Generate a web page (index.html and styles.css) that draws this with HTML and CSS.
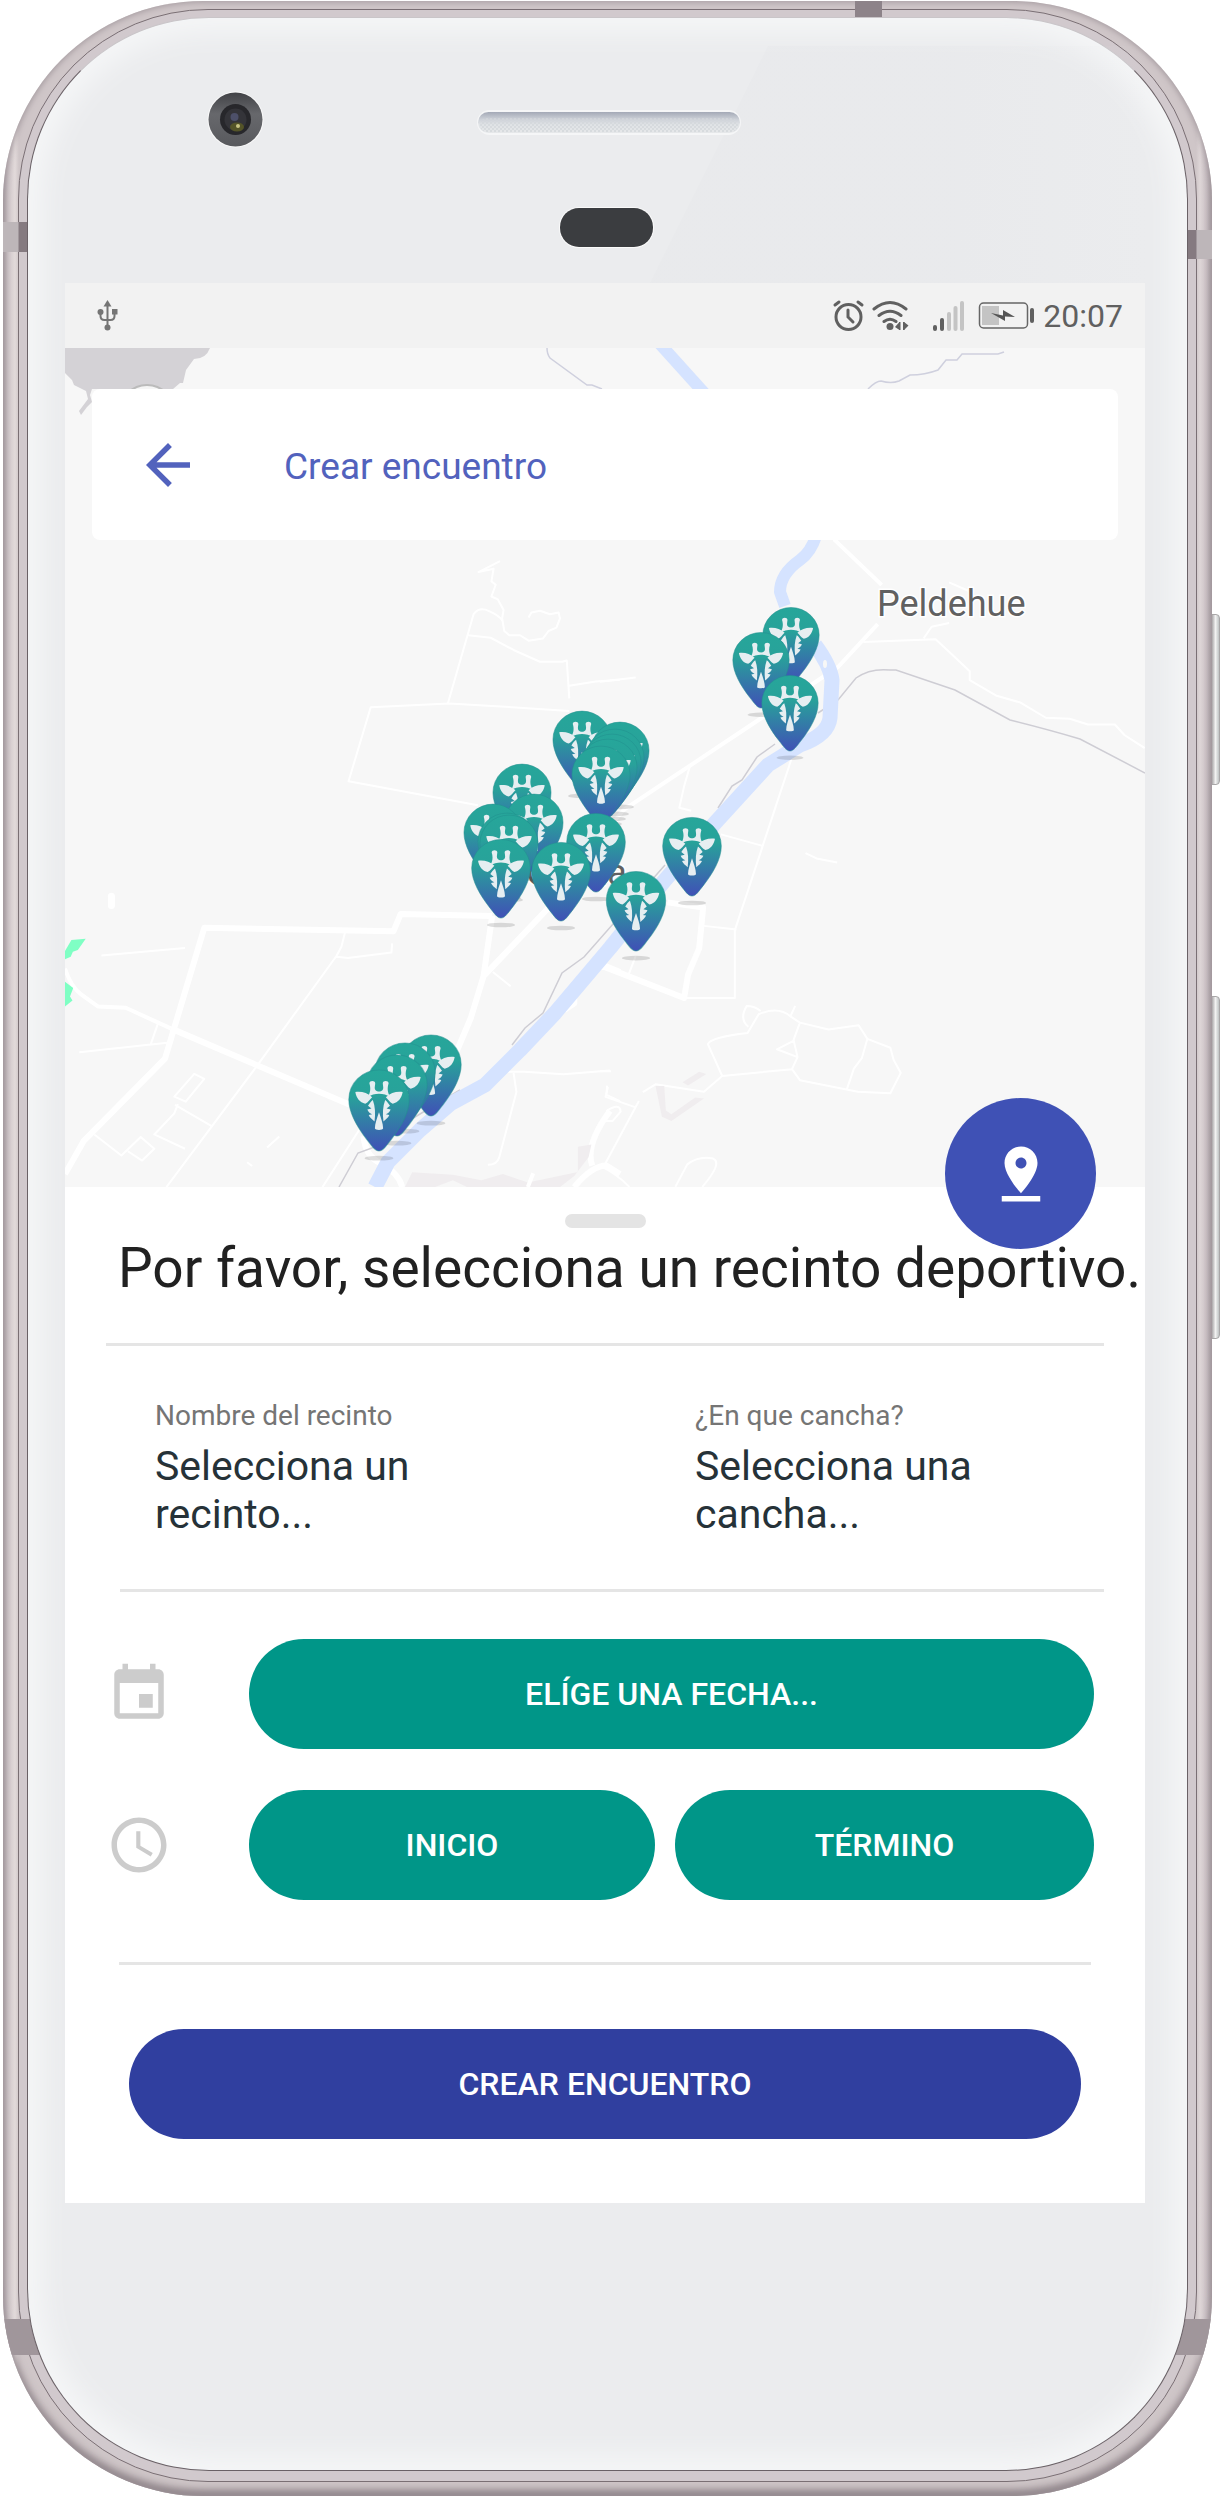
FILE: index.html
```html
<!DOCTYPE html>
<html lang="es">
<head>
<meta charset="utf-8">
<meta name="viewport" content="width=device-width, initial-scale=1">
<title>Crear encuentro</title>
<link rel="stylesheet" href="styles.css">
</head>
<body>
<div class="device">
  <span class="side-key side-key-power"></span>
  <span class="side-key side-key-volume"></span>
  <div class="shell">
    <span class="antenna antenna-top"></span>
    <span class="antenna antenna-left"></span>
    <span class="antenna antenna-right"></span>
    <span class="antenna antenna-base"></span>
    <div class="rail">
      <div class="glass">
        <svg class="bezel" viewBox="28 18 1159 265" aria-hidden="true">
          <defs>
            <linearGradient id="speaker" x1="0" y1="0" x2="0" y2="1">
              <stop offset="0" stop-color="#a3a9b6"/><stop offset=".35" stop-color="#cdd1d8"/><stop offset=".6" stop-color="#e0e3e6"/><stop offset="1" stop-color="#e6e8ea"/>
            </linearGradient>
            <linearGradient id="ring" x1="0" y1="0" x2="0" y2="1">
              <stop offset="0" stop-color="#414246"/><stop offset=".4" stop-color="#67686c"/><stop offset="1" stop-color="#58595d"/>
            </linearGradient>
            <linearGradient id="glare" x1="0" y1="0" x2="1" y2="0">
              <stop offset="0" stop-color="#e4e5e8"/><stop offset=".6" stop-color="#e4e5e8"/><stop offset="1" stop-color="#e4e5e8" stop-opacity="0"/>
            </linearGradient>
            <pattern id="mesh" width="4" height="4" patternUnits="userSpaceOnUse"><circle cx="1" cy="1" r="1" fill="#d3d7db"/><circle cx="3" cy="3" r="1" fill="#d3d7db"/></pattern>
          </defs>
          <path d="M768 46L650 283H1150V46Z" fill="url(#glare)" opacity=".3"/>
          <circle cx="235.500" cy="119.500" r="28" fill="#fafafa"/>
          <circle cx="235.500" cy="119.500" r="27" fill="url(#ring)"/>
          <circle cx="235.500" cy="119.500" r="15.500" fill="#27272b"/>
          <circle cx="235.500" cy="119.500" r="11" fill="#343439"/>
          <circle cx="234.500" cy="117" r="4" fill="#4d5069"/>
          <ellipse cx="237" cy="127" rx="7" ry="4.500" fill="#545428"/>
          <circle cx="238" cy="126" r="2" fill="#c9c584"/>
          <rect x="477" y="110" width="264" height="25" rx="12.500" fill="#f5f6f7"/>
          <rect x="478" y="112" width="262" height="21" rx="10.500" fill="url(#speaker)"/>
          <rect x="480" y="118" width="258" height="14" rx="7" fill="url(#mesh)"/>
          <rect x="559" y="207" width="95" height="41" rx="20" fill="#fafafa"/>
          <rect x="560" y="208" width="93" height="39" rx="19" fill="#3b3d40"/>
        </svg>

        <main class="screen">
          <div class="status-bar">
            <svg class="status-usb" viewBox="97 301 22 32" width="22" height="32" aria-label="USB">
              <g fill="none" stroke="#757575" stroke-width="2"><path d="M107.500 306V328M100.500 314V317Q100.500 321 104.500 321H110.500Q114.500 321 114.500 317V313"/></g>
              <g fill="#757575"><path d="M107.500 301L111.500 307.500H103.500Z"/><circle cx="107.500" cy="328.500" r="3"/><circle cx="100.500" cy="313" r="3"/><path d="M112 310H117.500V315.500H112Z"/></g>
            </svg>
            <svg class="status-icons" viewBox="832 298 204 36" width="204" height="36" aria-label="Alarma, wifi, señal y batería cargando">
              <g fill="none" stroke="#606060" stroke-width="3" stroke-linecap="round">
                <circle cx="848.500" cy="317" r="12.500"/><path d="M848 310V317L853 322M835 305L839 302M862 305L858 302"/>
                <path d="M874 309Q890 296 906 309M879 315.500Q890 307 901 315.500M884 321.500Q890 317 896 321.500"/>
              </g>
              <g fill="#606060"><circle cx="890" cy="326.500" r="3.500"/><path d="M895 327L899.500 322V330ZM908.500 325.500L904 322V330Z"/><path d="M899 322h1.500v8h-1.500zM903 322h1.500v8h-1.500z"/>
                <rect x="933" y="325" width="4" height="6" rx="2"/><rect x="940" y="318" width="4" height="13" rx="2"/></g>
              <g fill="#c4c4c4"><rect x="947" y="312" width="4" height="19" rx="2"/><rect x="953.500" y="306" width="4" height="25" rx="2"/><rect x="960" y="301" width="4" height="30" rx="2"/><rect x="982" y="306" width="17" height="19"/></g>
              <rect x="979.500" y="303" width="48" height="25" rx="4" fill="none" stroke="#666" stroke-width="1.500"/>
              <rect x="1030" y="308" width="4" height="15" rx="2" fill="#606060"/>
              <path d="M991 313L1003 315.500V310L1015 317L1005 316.500V321Z" fill="#555"/>
            </svg>
            <time class="status-time">20:07</time>
          </div>

          <section class="map" aria-label="Mapa de recintos">
            <svg class="map-canvas" viewBox="65 348 1080 839" role="img" aria-label="Recintos deportivos cerca de Colina">
              <defs>
                <linearGradient id="pin-fill" x1="0" y1="0" x2="0" y2="1">
                  <stop offset="0" stop-color="#26a69a"/><stop offset=".32" stop-color="#28a29a"/><stop offset="1" stop-color="#4050b6"/>
                </linearGradient>
                <g id="pin">
                  <ellipse cy="21" rx="42" ry="7" fill="#000" opacity=".13"/>
                  <path d="M0 0C-12 0-20-14-36-34C-62-68-88-110-88-150A88 86 0 0 1 88-150C88-110 62-68 36-34C20-14 12 0 0 0Z" fill="url(#pin-fill)" stroke="#22908f" stroke-opacity=".55" stroke-width="3"/>
                  <g fill="#e6eef1">
                    <path d="M-69-172C-50-174-34-170-20-157C-27-151-31-142-40-138C-56-141-66-155-69-172Z"/>
                    <path d="M69-172C50-174 34-170 20-157C27-151 31-142 40-138C56-141 66-155 69-172Z"/>
                    <path d="M-28-197C-28-206-11-206-11-197C-12-188-14-182-10-177C-5-172 5-172 10-177C14-182 12-188 11-197C11-206 28-206 28-197C24-185 24-172 33-157C14-170-14-170-33-157C-24-172-24-185-28-197Z"/>
                    <path d="M-18-149C-11-130-10-110-13-86C-19-92-27-97-30-105L-20-107C-26-110-32-114-34-121L-22-124L-32-132C-28-138-24-145-18-149Z"/>
                    <path d="M18-149C11-130 10-110 13-86C19-92 27-97 30-105L20-107C26-110 32-114 34-121L22-124L32-132C28-138 24-145 18-149Z"/>
                    <path d="M0-113C5-98 12-80 12-66C12-60-12-60-12-66C-12-80-5-98 0-113Z"/>
                  </g>
                </g>
              </defs>
              <rect x="65" y="348" width="1080" height="839" fill="#f7f7f7"/>

              <!-- north edge: hills and streams -->
              <path d="M65 348H210Q206 359 194 359L186 370L183 383H180L173 389H92L90 395L92 402L87 407L81 415L79 411L88 399L86 391L74 385L72 380L65 373Z" fill="#d4d2d6"/>
              <circle cx="147" cy="412" r="27" fill="#f5f5f5" stroke="#bbb" stroke-width="2"/>
              <g fill="none" stroke="#cfd0de" stroke-width="1.500">
                <path d="M547 348Q547 354 550 358L587 385L592 385L602 389"/>
                <path d="M868 389Q876 381 881 381Q891 384 899 381L910 375Q925 375 938 370L946 360H957L962 354H998L1004 352"/>
              </g>

              <!-- west side roads -->
              <g transform="translate(60 530) scale(.35714 .42092)" fill="none" stroke="#fff" stroke-linejoin="round">
                <g class="road-minor">
                  <path d="M1232 74L1172 100L1214 92L1208 122L1220 130L1208 158L1226 165L1242 190L1238 210L1244 240L1258 250H1288L1312 263L1352 258L1368 240L1390 232L1400 210L1396 196L1372 200L1344 192L1320 196L1312 208"/>
                  <path d="M1086 412L1158 200Q1174 182 1200 192Q1232 204 1238 215M1144 250L1206 256L1270 285L1344 313H1406L1419 310L1426 400M1426 370L1500 360L1568 356"/>
                  <path d="M1426 430L1210 418L1090 412L870 421L808 597L1170 654"/>
                  <path d="M116 1011L350 993M54 1241L300 1218M276 1168L254 1222M798 956L788 990L774 1012L550 1275L298 1561M774 1014L806 1017L928 1004L930 982"/>
                  <path d="M376 1292L404 1304L352 1358L320 1346ZM330 1364L320 1386L264 1436L350 1470M322 1366L426 1417M96 1436L172 1486L226 1442L264 1470L230 1498L190 1476M580 1467L614 1441M524 1502L538 1511M838 1425L735 1561"/>
                  <path d="M1244 1287H1300L1410 1293L1540 1284M1270 1290L1278 1335L1230 1490Q1224 1508 1198 1508M1532 1320L1530 1342L1568 1357M1212 1050L1262 1084"/>
                </g>
                <g class="road-main">
                  <path d="M14 1530L66 1452L294 1256L404 945L934 953L954 912L1210 917M1210 917L1186 1060L1410 860M1186 1060L1150 1160L1090 1280"/>
                  <path d="M310 1184L810 1365M850 1440Q855 1490 900 1505Q950 1530 958 1561"/>
                  <path d="M1440 1100L1440 1125L1412 1140M1510 1030L1568 1050M1440 1561Q1490 1510 1530 1510L1568 1530M1490 1510Q1470 1460 1540 1380"/>
                </g>
                <g class="road">
                  <path d="M14 1042Q30 1085 60 1104L106 1132L184 1135L310 1184"/>
                </g>
                <path d="M144 870V892" stroke-width="7" stroke-linecap="round" vector-effect="non-scaling-stroke"/>
                <path d="M966 1561L986 1526L1100 1532L1180 1545L1240 1530L1310 1550L1450 1525L1450 1465L1488 1460L1480 1490L1440 1535L1400 1561Z" fill="#f0edef" stroke="none"/>
                <path d="M1050 1561L1100 1545L1140 1561Z" fill="#f7f7f7" stroke="none"/>
                <path d="M1325 1528L1310 1561" class="road"/>
                <path d="M14 1000L32 974L72 971L50 998L36 1002L30 1014L14 1020ZM14 1073L37 1088L28 1108L35 1118L14 1132Z" fill="#7fffc4" stroke="none"/>
              </g>

              <!-- east side roads -->
              <g transform="translate(600 530) scale(.39669 .52296)" fill="none" stroke="#fff" stroke-linejoin="round">
                <g class="road-minor">
                  <path d="M0 290L90 282M228 448L212 490L200 531L230 537M486 430L340 765V895H210M305 582L410 604M262 757L344 764M518 618L546 628L598 636"/>
                  <path d="M664 214L846 209L886 237L932 270V287L1000 317L1060 330L1124 359L1184 361L1230 372H1298L1322 392L1373 417M880 100L940 120M816 207L836 185L880 178M0 840L20 838M90 815L72 850"/>
                  <path d="M492 910L480 930L504 942L576 955L652 947L674 973L732 990L740 1013L758 1038L732 1077L650 1074L504 1052L484 1031L308 1044L272 983Q280 970 372 962L400 926Q450 910 480 930M504 942L488 975L498 1008L484 1031M490 976L446 993L498 1008M674 973L660 1010L640 1030L622 1070M374 950Q350 935 370 910Q390 910 405 920"/>
                  <path d="M308 1044L262 1074L140 1060L108 1075M98 1092L10 1216M20 1065L14 1084L90 1104M18 1110Q50 1095 52 1112L32 1130H14ZM0 1216Q40 1230 74 1256M258 1256Q310 1210 285 1202Q250 1196 220 1213L190 1256M0 1035H28"/>
                </g>
                <g class="road">
                  <path d="M590 18L710 105M700 180L600 262L410 358L60 535L0 590"/>
                </g>
                <g class="road-main"><path d="M170 712L260 722L250 800L222 850L212 895L0 832"/></g>
                <path d="M140 1063H162L166 1110L180 1117L240 1085L262 1087L180 1130L156 1122ZM208 1056L250 1036L268 1040L222 1062Z" fill="#f0edef" stroke="none"/>
              </g>

              <g fill="none" stroke="#cecdd4" stroke-width="1.500">
                <path d="M339 1187L358 1153L380 1145M400 1126L460 1090M512 1045L525 1028L543 1013L562 973L584 957L665 865M718 808L732 786L742 780L757 757L775 744M818 713L838 700L856 678Q870 668 890 670H896L955 690L1010 720Q1050 730 1080 739L1145 773"/>
              </g>
              <g fill="none" stroke="#d5e3ff" stroke-linejoin="round">
                <path stroke-width="12" d="M660 344L706 395"/>
                <path stroke-width="12" d="M816 536Q811 552 800 560Q780 574 780 592L785 606"/>
                <path stroke-width="15" d="M375 1187L388 1162L420 1130L450 1104L485 1085L520 1050L555 1013L610 948L665 880L715 823L768 765L800 745Q828 735 830 718L832 680Q830 665 815 645"/>
              </g>
              <ellipse cx="825" cy="664" rx="2" ry="4" fill="#f7f7f7"/>

              <g class="map-label">
                <text x="877" y="616">Peldehue</text>
                <text x="526" y="885">Colina</text>
              </g>

              <g>
                <use href="#pin" transform="translate(791 683) scale(.32)"/>
                <use href="#pin" transform="translate(761 708) scale(.32)"/>
                <use href="#pin" transform="translate(790 751) scale(.32)"/>
                <use href="#pin" transform="translate(582 789) scale(.33)"/>
                <use href="#pin" transform="translate(620 800) scale(.33)"/>
                <use href="#pin" transform="translate(615 807) scale(.33)"/>
                <use href="#pin" transform="translate(612 812) scale(.33)"/>
                <use href="#pin" transform="translate(608 817) scale(.33)"/>
                <use href="#pin" transform="translate(601 824) scale(.33)"/>
                <use href="#pin" transform="translate(522 842) scale(.33)"/>
                <use href="#pin" transform="translate(534 872) scale(.33)"/>
                <use href="#pin" transform="translate(493 882) scale(.33)"/>
                <use href="#pin" transform="translate(507 891) scale(.33)"/>
                <use href="#pin" transform="translate(509 893) scale(.33)"/>
                <use href="#pin" transform="translate(596 892) scale(.333)"/>
                <use href="#pin" transform="translate(692 896) scale(.333)"/>
                <use href="#pin" transform="translate(501 918) scale(.333)"/>
                <use href="#pin" transform="translate(561 921) scale(.333)"/>
                <use href="#pin" transform="translate(636 951) scale(.337)"/>
                <use href="#pin" transform="translate(431 1116) scale(.343)"/>
                <use href="#pin" transform="translate(405 1124) scale(.343)"/>
                <use href="#pin" transform="translate(397 1136) scale(.343)"/>
                <use href="#pin" transform="translate(379 1151) scale(.343)"/>
              </g>
            </svg>

            <header class="toolbar">
              <button class="back" type="button" aria-label="Volver">
                <svg viewBox="0 0 24 24" width="66" height="66"><path d="M20 11H7.830l5.590-5.590L12 4l-8 8 8 8 1.410-1.410L7.830 13H20v-2z" fill="currentColor"/></svg>
              </button>
              <h1 class="toolbar-title">Crear encuentro</h1>
            </header>
            <button class="fab" type="button" aria-label="Usar mi ubicación">
              <svg viewBox="0 0 24 24" width="66" height="66"><path d="M18 8c0-3.310-2.690-6-6-6S6 4.690 6 8c0 4.500 6 11 6 11s6-6.500 6-11zm-8 0c0-1.100.9-2 2-2s2 .9 2 2-.89 2-2 2c-1.100 0-2-.9-2-2zM5 20v2h14v-2H5z" fill="#fff"/></svg>
            </button>
          </section>

          <section class="sheet">
            <div class="handle"></div>
            <h2 class="sheet-title">Por favor, selecciona un recinto deportivo.</h2>
            <hr class="rule rule-title">
            <dl class="choices">
              <div class="choice"><dt>Nombre del recinto</dt><dd>Selecciona un recinto...</dd></div>
              <div class="choice"><dt>¿En que cancha?</dt><dd>Selecciona una cancha...</dd></div>
            </dl>
            <hr class="rule rule-choices">
            <div class="schedule">
              <svg class="row-icon" viewBox="0 0 24 24" width="66" height="66" aria-hidden="true"><path d="M17 12h-5v5h5v-5zM16 1v2H8V1H6v2H5c-1.110 0-1.990.9-1.990 2L3 19c0 1.100.89 2 2 2h14c1.100 0 2-.9 2-2V5c0-1.100-.9-2-2-2h-1V1h-2zm3 18H5V8h14v11z"/></svg>
              <button class="pill" type="button">ELÍGE UNA FECHA...</button>
              <svg class="row-icon" viewBox="0 0 24 24" width="66" height="66" aria-hidden="true"><path d="M11.990 2C6.470 2 2 6.480 2 12s4.470 10 9.990 10C17.520 22 22 17.520 22 12S17.520 2 11.990 2zM12 20c-4.420 0-8-3.580-8-8s3.580-8 8-8 8 3.580 8 8-3.580 8-8 8zm.5-13H11v6l5.250 3.150.75-1.230-4.500-2.670z"/></svg>
              <div class="times">
                <button class="pill" type="button">INICIO</button>
                <button class="pill" type="button">TÉRMINO</button>
              </div>
            </div>
            <hr class="rule rule-schedule">
            <button class="pill pill-primary" type="button">CREAR ENCUENTRO</button>
          </section>
        </main>
      </div>
    </div>
  </div>
</div>
</body>
</html>
```
FILE: styles.css
```css
* { box-sizing: border-box; }

body {
  margin: 0;
  background: #fff;
  font-family: Roboto, "Liberation Sans", sans-serif;
  color: #212121;
}

h1, h2, dl, dd { margin: 0; font-weight: 400; }

button {
  border: 0;
  padding: 0;
  font: inherit;
  cursor: pointer;
}

svg { display: block; flex: none; }

/* Phone body */
.device {
  position: relative;
  padding: 1px 10px 0 3px;
}

.shell {
  position: relative;
  overflow: hidden;
  padding: 8px 15px 14px;
  border-radius: 200px;
  background: linear-gradient(90deg, #b5abb0 0, #cfc6c9 5px, #e2dada 12px, #cfc6c8 16px, #cfc6c8 calc(100% - 16px), #ded6d7 calc(100% - 12px), #c9bfc3 calc(100% - 5px), #b0a6aa 100%);
  box-shadow: inset 0 0 6px 1px #a3999e, inset 0 -8px 10px -3px #7d7278;
}

.rail {
  border: 1px solid #7a6f74;
  border-radius: 190px;
  padding: 7px 8px 10px;
  background: #d1c9cd;
}

.glass {
  position: relative;
  z-index: 2;
  border: 1px solid #6a6166;
  border-top-color: #c9c5c8;
  border-radius: 182px;
  padding-bottom: 267px;
  background: #ebecee;
  box-shadow: inset 0 0 26px 14px #f5f6f7;
}

.bezel { width: 100%; height: auto; }

.antenna {
  position: absolute;
  z-index: 1;
  background: #8d8389;
}

.antenna-top { top: 0; right: 330px; width: 27px; height: 17px; }
.antenna-left { top: 221px; left: 0; width: 26px; height: 30px; background: linear-gradient(90deg, #bdb6b9 15px, #857a80 16px); }
.antenna-right { top: 229px; right: 0; width: 26px; height: 29px; background: linear-gradient(270deg, #bdb6b9 15px, #857a80 16px); }
.antenna-base { bottom: 141px; left: 0; right: 0; height: 36px; background: #a0969b; }

.side-key {
  position: absolute;
  right: 2px;
  width: 9px;
  border: 1px solid #a9a7a8;
  border-radius: 0 4px 4px 0;
  background: linear-gradient(90deg, #a9a6a8, #f2f2f2 50%, #bfc3c4);
}

.side-key-power { top: 614px; height: 171px; }
.side-key-volume { top: 996px; height: 343px; }

/* App screen */
.screen {
  margin: 0 42px 0 37px;
  background: #fff;
}

.status-bar {
  display: flex;
  align-items: center;
  height: 65px;
  padding: 0 22px 0 32px;
  background: #f2f2f2;
  color: #606060;
}

.status-icons { margin-left: auto; }

.status-time {
  margin-left: 7px;
  font-size: 32px;
  line-height: 40px;
}

/* Map */
.map { position: relative; }
.map-canvas { width: 100%; height: auto; }

.road-minor path, .road path, path.road, .road-main path { vector-effect: non-scaling-stroke; }
.road-minor { stroke-width: 2px; }
.road { stroke-width: 4px; }
.road-main { stroke-width: 6px; }

.map-label {
  font-size: 36px;
  fill: #616161;
  stroke: #fff;
  stroke-width: 3px;
  paint-order: stroke;
}

.toolbar {
  position: absolute;
  top: 41px;
  left: 27px;
  right: 27px;
  display: flex;
  align-items: center;
  gap: 83px;
  height: 151px;
  padding-left: 43px;
  border-radius: 8px;
  background: #fff;
  color: #5262bd;
}

.back { background: none; color: inherit; }

.toolbar-title {
  padding-top: 4px;
  font-size: 37px;
  line-height: 44px;
}

.fab {
  position: absolute;
  right: 49px;
  bottom: -62px;
  display: grid;
  place-items: center;
  width: 151px;
  height: 151px;
  border-radius: 50%;
  background: #3f51b5;
}

/* Bottom sheet */
.sheet {
  display: flow-root;
  padding-bottom: 64px;
}

.handle {
  width: 81px;
  height: 14px;
  margin: 27px auto 8px;
  border-radius: 7px;
  background: #e4e4e4;
}

.sheet-title {
  padding-left: 53px;
  font-size: 55px;
  line-height: 64px;
  white-space: nowrap;
}

.rule {
  height: 3px;
  border: 0;
  background: #e5e5e5;
}

.rule-title { margin: 43px 41px 54px; }
.rule-choices { margin: 51px 41px 47px 55px; }
.rule-schedule { margin: 62px 54px 64px; }

.choices {
  display: grid;
  grid-template-columns: 1fr 1fr;
}

.choice { padding: 0 90px; }

.choice dt {
  margin-bottom: 10px;
  font-size: 28px;
  line-height: 32px;
  color: #757575;
}

.choice dd {
  font-size: 41px;
  line-height: 48px;
  color: #263238;
}

.schedule {
  display: grid;
  grid-template-columns: 66px 1fr;
  align-items: center;
  gap: 41px 77px;
  padding: 0 51px 0 41px;
}

.row-icon { fill: #ccc; }

.times {
  display: grid;
  grid-template-columns: 406fr 419fr;
  gap: 20px;
}

.pill {
  height: 110px;
  border-radius: 55px;
  background: #009688;
  color: #fff;
  font-size: 32px;
  font-weight: 500;
  line-height: 40px;
}

.pill-primary {
  display: block;
  width: calc(100% - 128px);
  margin: 0 auto;
  background: #303f9f;
}
```
